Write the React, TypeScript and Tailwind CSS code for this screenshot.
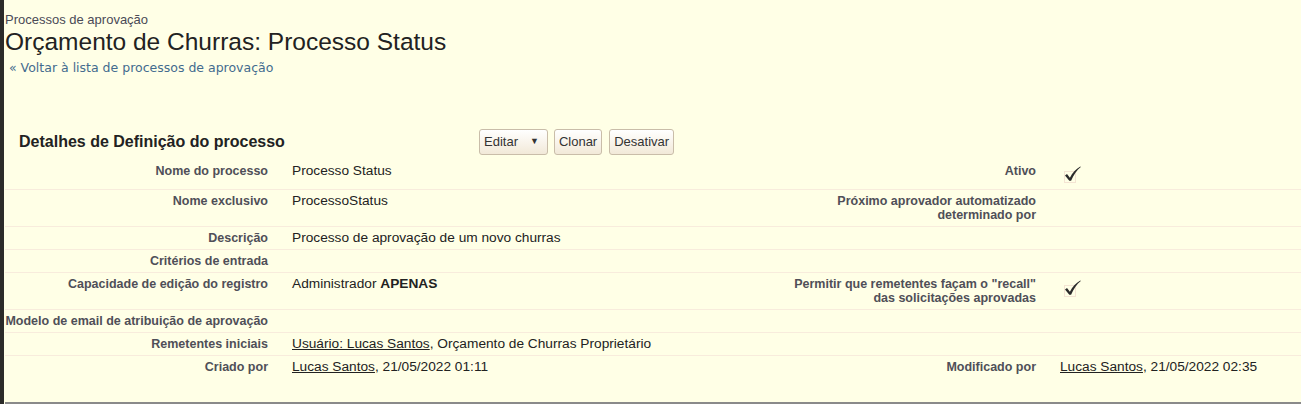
import type { ReactNode } from "react";

function Check() {
  return (
    <svg width="23" height="21" viewBox="0 0 23 21" className="inline-block align-top">
      <rect x="4.5" y="8.5" width="11" height="11" fill="none" stroke="#e8c8c0" strokeDasharray="1 1" />
      <path
        d="M5 12.4 L7 10.9 L9.9 14.8 C12.3 9.8 15.7 6 20.3 3.4 L20.8 4.1 C16.9 7.2 13.7 11.6 11.1 17.8 L9.3 17.8 Z"
        fill="#2b2b2b"
      />
    </svg>
  );
}

function Row({
  label,
  value,
  label2,
  value2,
  last,
}: {
  label: ReactNode;
  value?: ReactNode;
  label2?: ReactNode;
  value2?: ReactNode;
  last?: boolean;
}) {
  return (
    <div className={`flex ${last ? "" : "border-b border-[#f8ecdc]"}`}>
      <div className="w-[275px] shrink-0 whitespace-nowrap pr-3 pt-1 pb-1 text-right text-[12.5px] leading-[14px] font-bold text-[#4f4f58]">
        {label}
      </div>
      <div className="w-[500px] shrink-0 pl-3 pt-1 pb-1 text-[13.7px] leading-[14px] text-[#222]">{value}</div>
      <div className="w-[268px] shrink-0 pr-3 pl-3 pt-1 pb-1 text-right text-[12.5px] leading-[14px] font-bold text-[#4f4f58]">
        {label2}
      </div>
      <div className="flex-1 pl-3 pt-1 pb-1 text-[13.7px] leading-[14px] text-[#222]">{value2}</div>
    </div>
  );
}

function Btn({ children, className = "" }: { children: ReactNode; className?: string }) {
  return (
    <button
      className={`flex h-[26px] items-center rounded-[3px] border border-[#c9bda9] bg-gradient-to-b from-white to-[#f2e9d8] px-1 text-[13px] text-[#333] ${className}`}
    >
      {children}
    </button>
  );
}

export default function App() {
  const link = "underline text-[#222]";
  return (
    <div className="flex min-h-[404px] bg-[#ffffe6] font-['Liberation_Sans',Arial,sans-serif]">
      <div className="w-1 shrink-0 bg-[#2b2b29]" />
      <div className="flex flex-1 flex-col pl-px">
        <div className="pt-[13px] text-[13px] leading-[14px] text-[#4a4a56]">Processos de aprovação</div>
        <h1 className="text-[24.5px] leading-[30px] text-[#222]">Orçamento de Churras: Processo Status</h1>
        <div className="pt-1 pl-1 font-['DejaVu_Sans',Verdana,sans-serif] text-[12.5px] leading-[14px] text-[#436b8e]">
          « Voltar à lista de processos de aprovação
        </div>

        <div className="mt-[48px] flex h-[37px] items-center">
          <div className="w-[474px] shrink-0 pl-[14px] text-[16px] font-bold text-[#222]">
            Detalhes de Definição do processo
          </div>
          <div className="flex">
            <Btn>
              Editar <span className="ml-[12px] mr-[4px] text-[9px]">▼</span>
            </Btn>
            <Btn className="ml-[6px]">Clonar</Btn>
            <Btn className="ml-[7px]">Desativar</Btn>
          </div>
        </div>

        <div className="flex flex-col">
          <Row
            label="Nome do processo"
            value="Processo Status"
            label2="Ativo"
            value2={
              <span className="-mt-px block h-[22px]">
                <Check />
              </span>
            }
          />
          <Row
            label="Nome exclusivo"
            value="ProcessoStatus"
            label2={
              <>
                Próximo aprovador automatizado
                <br />
                determinado por
              </>
            }
          />
          <Row label="Descrição" value="Processo de aprovação de um novo churras" />
          <Row label="Critérios de entrada" />
          <Row
            label="Capacidade de edição do registro"
            value={
              <>
                Administrador <b>APENAS</b>
              </>
            }
            label2={
              <>
                Permitir que remetentes façam o "recall"
                <br />
                das solicitações aprovadas
              </>
            }
            value2={<Check />}
          />
          <Row label="Modelo de email de atribuição de aprovação" />
          <Row
            label="Remetentes iniciais"
            value={
              <>
                <span className={link}>Usuário: Lucas Santos</span>, Orçamento de Churras Proprietário
              </>
            }
          />
          <Row
            label="Criado por"
            value={
              <>
                <span className={link}>Lucas Santos</span>, 21/05/2022 01:11
              </>
            }
            label2="Modificado por"
            value2={
              <>
                <span className={link}>Lucas Santos</span>, 21/05/2022 02:35
              </>
            }
            last
          />
        </div>
        <div className="flex-1" />
        <div className="h-[2px] bg-[#8a8a8a]" />
      </div>
    </div>
  );
}
